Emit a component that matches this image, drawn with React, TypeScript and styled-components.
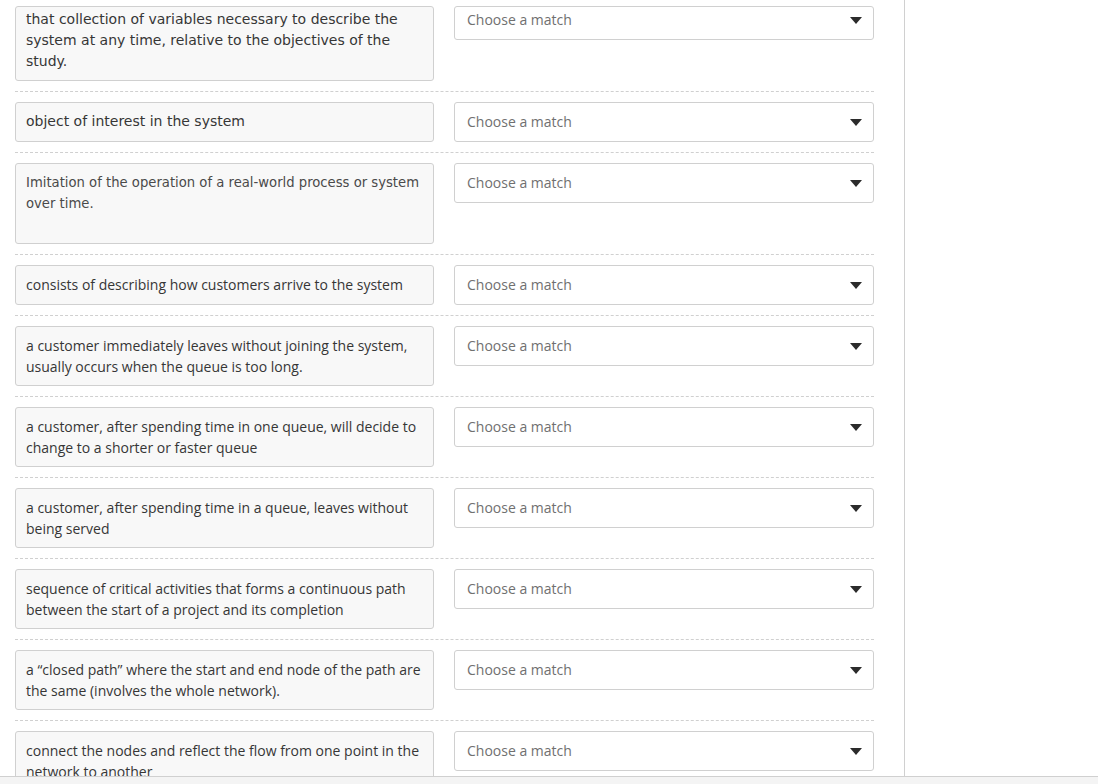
import * as React from "react";
import styled, { createGlobalStyle } from "styled-components";

const GlobalStyle = createGlobalStyle`
  html, body {
    margin: 0;
    padding: 0;
    background: #f4f4f4;
  }
  body {
    font-family: "Open Sans", "Liberation Sans", sans-serif;
  }
`;

const Page = styled.div`
  height: 784px;
  overflow: hidden;
  background: #f4f4f4;
`;

const Main = styled.div`
  display: flex;
  height: 776px;
  background: #fff;
  border-bottom: 1px solid #d0d0d0;
`;

const Panel = styled.div`
  box-sizing: border-box;
  width: 905px;
  padding: 6px 0 0 15px;
  border-right: 1px solid #d0d0d0;
  overflow: hidden;
`;

const Row = styled.div`
  display: grid;
  grid-template-columns: 419px 420px;
  column-gap: 20px;
  align-items: start;
  width: 859px;
  padding-bottom: 10px;
  margin-bottom: 10px;
  border-bottom: 1px dashed #d0d0d0;
`;

const Prompt = styled.div<{ $legacy?: boolean; $clipped?: boolean; $small?: boolean }>`
  box-sizing: border-box;
  min-height: ${(p) => (p.$clipped ? 34 : 40)}px;
  padding: ${(p) => (p.$clipped ? "2px 10px 8px" : "8px 10px")};
  background: #f8f8f8;
  border: 1px solid #d0d0d0;
  border-radius: 3px;
  color: ${(p) => (p.$small ? "#4a4a4a" : "#363636")};
  font-family: ${(p) =>
    p.$legacy
      ? '"DejaVu Sans", Verdana, sans-serif'
      : '"Open Sans", "Liberation Sans", sans-serif'};
  font-size: ${(p) => (p.$small ? "13.2px" : "14px")};
  line-height: 21px;
  overflow: hidden;
`;

const Line = styled.span`
  display: block;
  min-height: 21px;
  white-space: nowrap;
`;

const Select = styled.div<{ $clipped?: boolean }>`
  box-sizing: border-box;
  display: flex;
  align-items: center;
  justify-content: space-between;
  height: ${(p) => (p.$clipped ? 34 : 40)}px;
  padding: 0 11px ${(p) => (p.$clipped ? 7 : 1)}px 12px;
  background: #fff;
  border: 1px solid #d0d0d0;
  border-radius: 3px;
  color: #707070;
  font-family: "Open Sans", "Liberation Sans", sans-serif;
  font-size: 14px;
`;

const Caret = styled.span`
  width: 0;
  height: 0;
  margin-top: 2px;
  border-left: 6px solid transparent;
  border-right: 6px solid transparent;
  border-top: 7px solid #2b2b2b;
`;

type Item = { lines: string[]; legacy?: boolean; small?: boolean };

const items: Item[] = [
  {
    lines: [
      "that collection of variables necessary to describe the",
      "system at any time, relative to the objectives of the",
      "study.",
    ],
    legacy: true,
  },
  { lines: ["object of interest in the system"], legacy: true },
  {
    lines: [
      "Imitation of the operation of a real-world process or system",
      "over time.",
      "",
    ],
    legacy: true,
    small: true,
  },
  { lines: ["consists of describing how customers arrive to the system"] },
  {
    lines: [
      "a customer immediately leaves without joining the system,",
      "usually occurs when the queue is too long.",
    ],
  },
  {
    lines: [
      "a customer, after spending time in one queue, will decide to",
      "change to a shorter or faster queue",
    ],
  },
  {
    lines: [
      "a customer, after spending time in a queue, leaves without",
      "being served",
    ],
  },
  {
    lines: [
      "sequence of critical activities that forms a continuous path",
      "between the start of a project and its completion",
    ],
  },
  {
    lines: [
      "a \u201cclosed path\u201d where the start and end node of the path are",
      "the same (involves the whole network).",
    ],
  },
  {
    lines: [
      "connect the nodes and reflect the flow from one point in the",
      "network to another",
    ],
  },
];

export default function App() {
  return (
    <Page>
      <GlobalStyle />
      <Main>
        <Panel>
          {items.map((item, i) => (
            <Row key={i}>
              <Prompt $legacy={item.legacy} $small={item.small} $clipped={i === 0}>
                {item.lines.map((line, j) => (
                  <Line key={j}>{line}</Line>
                ))}
              </Prompt>
              <Select $clipped={i === 0}>
                <span>Choose a match</span>
                <Caret />
              </Select>
            </Row>
          ))}
        </Panel>
      </Main>
    </Page>
  );
}
